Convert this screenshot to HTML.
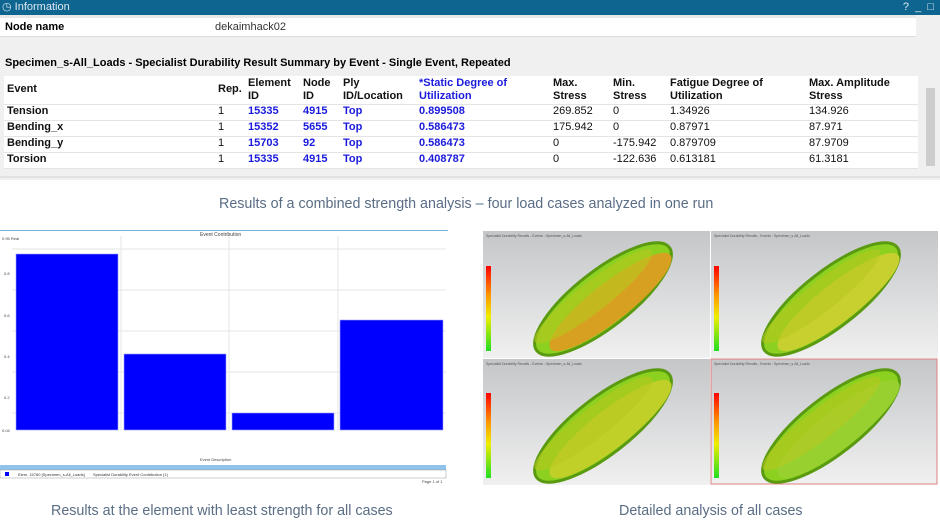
<!DOCTYPE html>
<html><head><meta charset="utf-8"><style>
body{margin:0;width:940px;height:520px;background:#fff;font-family:"Liberation Sans",sans-serif;position:relative;overflow:hidden}
.abs{position:absolute}
table.t{border-collapse:collapse;font-size:11px;font-family:"Liberation Sans",sans-serif;position:absolute;left:4px;top:76px;width:914px;background:#fff}
table.t td{padding:0 3px;height:15px;border-bottom:1px solid #e4e4e4;vertical-align:top;line-height:13px;color:#111}
table.t tr.h td{font-weight:bold;height:27px;vertical-align:bottom;padding-bottom:1px}
table.t td.b{color:#1a1adc;font-weight:bold}
.cap{color:#5a6d85;font-size:14.3px;position:absolute;white-space:nowrap}
</style></head><body>
<div class="abs" style="left:0;top:0;width:940px;height:180px;background:#f0f0f0"></div>
<div class="abs" style="left:0;top:0;width:940px;height:15px;background:#0d6590;color:#dfe9f0;font-size:11px;line-height:14px"><span style="margin-left:2px">◷ Information</span><span style="position:absolute;right:6px">?&nbsp;&nbsp;_&nbsp;&nbsp;□</span></div>
<div class="abs" style="left:0;top:15px;width:916px;height:3px;background:#e8e8e8"></div>
<div class="abs" style="left:0;top:18px;width:916px;height:18px;background:#fff;border-bottom:1px solid #ddd;font-size:11px;line-height:18px"><b style="margin-left:5px">Node name</b><span style="position:absolute;left:215px;color:#333">dekaimhack02</span></div>
<div class="abs" style="left:5px;top:57px;font-size:11px;font-weight:bold">Specimen_s-All_Loads - Specialist Durability Result Summary by Event - Single Event, Repeated</div>
<table class="t">
<colgroup><col style="width:211px"><col style="width:30px"><col style="width:55px"><col style="width:40px"><col style="width:76px"><col style="width:134px"><col style="width:60px"><col style="width:57px"><col style="width:139px"><col></colgroup>
<tr class="h"><td style="vertical-align:middle">Event</td><td style="vertical-align:middle">Rep.</td><td>Element<br>ID</td><td>Node<br>ID</td><td>Ply<br>ID/Location</td><td class="b">*Static Degree of<br>Utilization</td><td>Max.<br>Stress</td><td>Min.<br>Stress</td><td>Fatigue Degree of<br>Utilization</td><td>Max. Amplitude<br>Stress</td></tr>
<tr><td><b>Tension</b></td><td>1</td><td class="b">15335</td><td class="b">4915</td><td class="b">Top</td><td class="b">0.899508</td><td>269.852</td><td>0</td><td>1.34926</td><td>134.926</td></tr>
<tr><td><b>Bending_x</b></td><td>1</td><td class="b">15352</td><td class="b">5655</td><td class="b">Top</td><td class="b">0.586473</td><td>175.942</td><td>0</td><td>0.87971</td><td>87.971</td></tr>
<tr><td><b>Bending_y</b></td><td>1</td><td class="b">15703</td><td class="b">92</td><td class="b">Top</td><td class="b">0.586473</td><td>0</td><td>-175.942</td><td>0.879709</td><td>87.9709</td></tr>
<tr><td><b>Torsion</b></td><td>1</td><td class="b">15335</td><td class="b">4915</td><td class="b">Top</td><td class="b">0.408787</td><td>0</td><td>-122.636</td><td>0.613181</td><td>61.3181</td></tr>
</table>
<div class="abs" style="left:926px;top:88px;width:9px;height:78px;background:#cdcdcd"></div>
<div class="abs" style="left:0;top:176px;width:940px;height:2px;background:#e2e2e2"></div>
<div class="cap" style="left:219px;top:196px">Results of a combined strength analysis – four load cases analyzed in one run</div>

<div class="abs" style="left:0;top:230px;width:448px;height:256px;background:#fff;border-top:1px solid #7ab4d8"></div>
<div class="abs" style="left:200px;top:232px;font-size:5px;color:#444">Event Contribution</div>
<svg class="abs" style="left:0;top:231px" width="448" height="255">
<g stroke="#e6e6e6" stroke-width="1"><line x1="12" y1="18" x2="446" y2="18"/><line x1="12" y1="59" x2="446" y2="59"/><line x1="12" y1="100" x2="446" y2="100"/><line x1="12" y1="141" x2="446" y2="141"/><line x1="12" y1="182" x2="446" y2="182"/><line x1="121" y1="5" x2="121" y2="200"/><line x1="229" y1="5" x2="229" y2="200"/><line x1="338" y1="5" x2="338" y2="200"/></g>
<g fill="#0000ff" stroke="#9aa0ff" stroke-width="0.6"><rect x="16" y="23" width="102" height="176"/><rect x="124" y="123" width="102" height="76"/><rect x="232" y="182" width="102" height="17"/><rect x="340" y="89" width="103" height="110"/></g>
<g font-size="4" fill="#444" font-family="Liberation Sans"><text x="2" y="9">0.95 Real</text><text x="4" y="44">0.8</text><text x="4" y="86">0.6</text><text x="4" y="127">0.4</text><text x="4" y="168">0.2</text><text x="2" y="201">0.04</text><text x="200" y="230">Event Description</text><text x="422" y="252">Page 1 of 1</text></g>
<rect x="0" y="234" width="446" height="5" fill="#8fc3ec"/>
<rect x="0" y="239" width="446" height="8" fill="#fff" stroke="#999" stroke-width="0.5"/>
<rect x="5" y="241" width="4" height="4" fill="#00f"/>
<g font-size="4" fill="#333"><text x="18" y="245">Elem. 15780 [Specimen_s-All_Loads]</text><text x="93" y="245">Specialist Durability Event Contribution (1)</text></g>
</svg>

<svg class="abs" style="left:483px;top:231px" width="455" height="254">
<defs>
<linearGradient id="bg" x1="0" y1="0" x2="0" y2="1"><stop offset="0" stop-color="#c4c6c8"/><stop offset="1" stop-color="#f0f0f0"/></linearGradient>
<linearGradient id="lg" x1="0" y1="0" x2="0" y2="1"><stop offset="0" stop-color="#f00"/><stop offset=".35" stop-color="#f90"/><stop offset=".6" stop-color="#ee0"/><stop offset="1" stop-color="#2d2"/></linearGradient>
<g id="ring"><ellipse cx="0" cy="0" rx="84" ry="28" fill="#8cd020" stroke="#5a9a10" stroke-width="3"/><ellipse cx="4" cy="7" rx="76" ry="19" fill="currentColor"/><ellipse cx="-6" cy="-8" rx="74" ry="15" fill="#b8c820" opacity=".6"/></g>
</defs>
<rect x="0" y="0" width="227" height="127" fill="url(#bg)"/><rect x="228" y="0" width="227" height="127" fill="url(#bg)"/>
<rect x="0" y="128" width="227" height="126" fill="url(#bg)"/><rect x="228" y="128" width="226" height="125" fill="url(#bg)" stroke="#e08080"/>
<g transform="translate(120,68) rotate(-38)" color="#d8a020"><use href="#ring"/></g>
<g transform="translate(348,68) rotate(-38)" color="#c8d030"><use href="#ring"/></g>
<g transform="translate(120,195) rotate(-38)" color="#c0d028"><use href="#ring"/></g>
<g transform="translate(348,195) rotate(-38)" color="#98d030"><use href="#ring"/></g>
<rect x="3" y="35" width="5" height="85" fill="url(#lg)"/><rect x="231" y="35" width="5" height="85" fill="url(#lg)"/>
<rect x="3" y="162" width="5" height="85" fill="url(#lg)"/><rect x="231" y="162" width="5" height="85" fill="url(#lg)"/>
<g font-size="3.5" fill="#555"><text x="3" y="6">Specialist Durability Results - Events : Specimen_s-All_Loads</text><text x="231" y="6">Specialist Durability Results - Events : Specimen_s-All_Loads</text><text x="3" y="134">Specialist Durability Results - Events : Specimen_s-All_Loads</text><text x="231" y="134">Specialist Durability Results - Events : Specimen_s-All_Loads</text></g>
</svg>

<div class="cap" style="left:51px;top:503px">Results at the element with least strength for all cases</div>
<div class="cap" style="left:619px;top:503px">Detailed analysis of all cases</div>
</body></html>
